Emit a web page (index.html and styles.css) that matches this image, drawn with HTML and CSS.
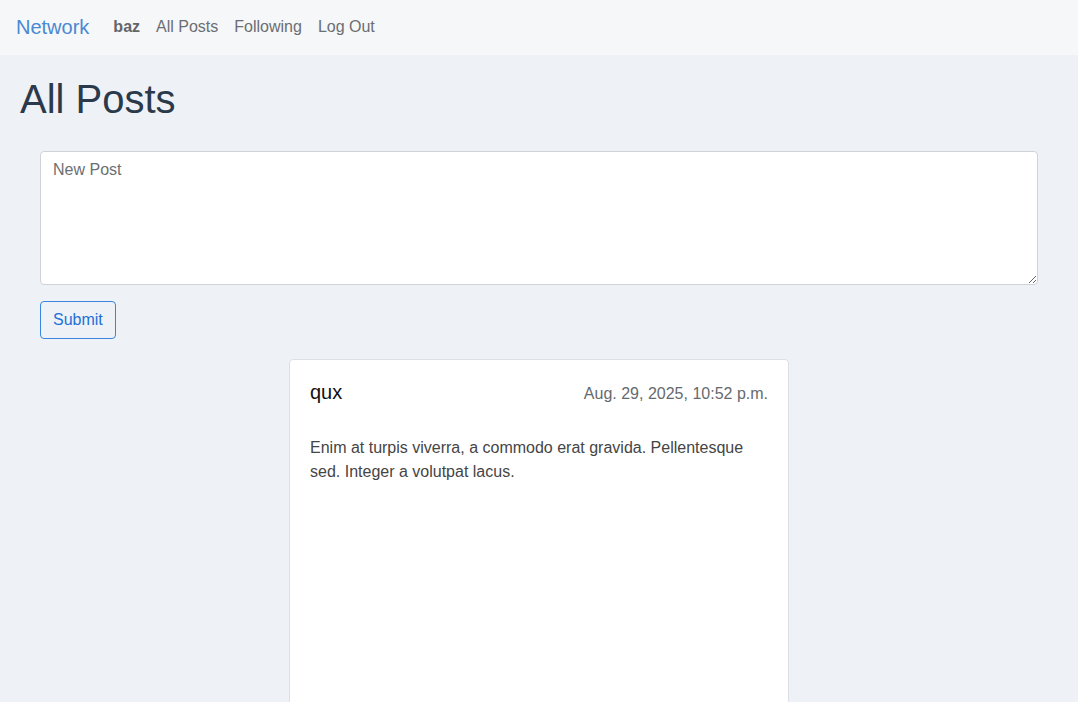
FILE: index.html
```html
<!DOCTYPE html>
<html lang="en">
<head>
<meta charset="utf-8">
<title>Network</title>
<link rel="stylesheet" href="styles.css">
</head>
<body>
<nav class="navbar">
  <a class="brand" href="#">Network</a>
  <ul class="nav">
    <li><a class="nav-link user" href="#">baz</a></li>
    <li><a class="nav-link" href="#">All Posts</a></li>
    <li><a class="nav-link" href="#">Following</a></li>
    <li><a class="nav-link" href="#">Log Out</a></li>
  </ul>
</nav>
<main class="page">
  <h1 class="title">All Posts</h1>
  <form class="new-post">
    <textarea class="post-input" rows="5" placeholder="New Post"></textarea>
    <div><button class="btn" type="button">Submit</button></div>
  </form>
  <article class="card">
    <header class="card-head">
      <span class="author">qux</span>
      <span class="date">Aug. 29, 2025, 10:52 p.m.</span>
    </header>
    <p class="card-body">Enim at turpis viverra, a commodo erat gravida. Pellentesque sed. Integer a volutpat lacus.</p>
  </article>
</main>
</body>
</html>
```

FILE: styles.css
```css
* { box-sizing: border-box; }
html, body { height: 100%; }
body {
  margin: 0;
  background: #eef2f6;
  font-family: "Liberation Sans", Arial, sans-serif;
  font-size: 16px;
  line-height: 1.5;
  color: #212529;
  overflow: hidden;
}
.navbar {
  display: flex;
  align-items: center;
  height: 55px;
  padding: 0 16px 2px;
  background: #f6f7f9;
}
.brand {
  font-size: 20px;
  line-height: 30px;
  color: #4a88d2;
  text-decoration: none;
  margin-right: 16px;
}
.nav {
  display: flex;
  list-style: none;
  margin: 0;
  padding: 0;
}
.nav-link {
  display: block;
  padding: 8px;
  color: #6b6e72;
  text-decoration: none;
}
.nav-link.user {
  font-weight: bold;
  color: #636568;
}
.page {
  padding: 0 20px;
}
.title {
  margin: 20px 0 28px;
  font-size: 40px;
  font-weight: normal;
  line-height: 1.2;
  color: #2b3a4b;
}
.new-post {
  padding: 0 20px;
  display: flex;
  flex-direction: column;
  gap: 16px;
}
.post-input {
  display: block;
  width: 100%;
  padding: 6px 12px;
  font-family: inherit;
  font-size: 16px;
  line-height: 24px;
  color: #333;
  background: #fff;
  border: 1px solid #cfd3d8;
  border-radius: 4px;
  resize: vertical;
}
.post-input::placeholder { color: #6c6f73; }
.btn {
  padding: 6px 12px;
  font-family: inherit;
  font-size: 16px;
  line-height: 24px;
  color: #1f6fd8;
  background: transparent;
  border: 1px solid #3a85e0;
  border-radius: 4px;
}
.card {
  width: 500px;
  min-height: 420px;
  margin: 20px auto 0;
  padding: 20px;
  background: #fff;
  border: 1px solid #dcdfe3;
  border-radius: 4px;
}
.card-head {
  display: flex;
  justify-content: space-between;
  align-items: baseline;
}
.author {
  font-size: 20px;
  line-height: 24px;
  color: #111;
}
.date {
  color: #666a6e;
}
.card-body {
  margin: 30px 0 0;
  color: #454545;
  line-height: 24px;
}
```
